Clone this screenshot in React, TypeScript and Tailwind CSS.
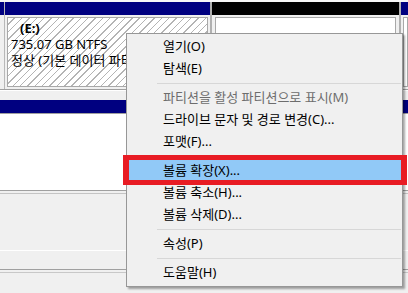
import React from 'react';

type Item = { label?: string; sep?: boolean; disabled?: boolean; active?: boolean };

const menu: Item[] = [
  { label: '열기(O)' },
  { label: '탐색(E)' },
  { sep: true },
  { label: '파티션을 활성 파티션으로 표시(M)', disabled: true },
  { label: '드라이브 문자 및 경로 변경(C)...' },
  { label: '포맷(F)...' },
  { sep: true },
  { label: '볼륨 확장(X)...', active: true },
  { label: '볼륨 축소(H)...' },
  { label: '볼륨 삭제(D)...' },
  { sep: true },
  { label: '속성(P)' },
  { sep: true },
  { label: '도움말(H)' },
];

const hatch =
  'bg-[repeating-linear-gradient(135deg,#ffffff_0px,#ffffff_4.2px,#b4b4b4_4.2px,#b4b4b4_5.2px)]';

export default function App() {
  return (
    <div className="relative w-[408px] h-[293px] overflow-hidden bg-[#f0f0f0] text-black font-['Noto_Sans','Noto_Sans_CJK_KR',sans-serif] text-[13px]">
      {/* disk 1 */}
      <div className="h-[2px] bg-[#f7f7f7]" />
      <div className="flex h-[88px] border-b border-[#a0a0a0]">
        <div className="w-[4px] flex flex-col">
          <div className="h-[13px] bg-[#000080]" />
        </div>
        <div className="w-[1px] bg-[#b8b8b8]" />
        <div className="w-[205px] flex flex-col px-[2px]">
          <div className="h-[13px] bg-[#000080] -mx-[2px]" />
          <div className={`mt-[2px] h-[70px] border border-[#a8a8a8] ${hatch} pl-[3px] pt-[2px] leading-[16px]`}>
            <div className="pl-[9px] font-bold">(E:)</div>
            <div>735.07 GB NTFS</div>
            <div className="whitespace-nowrap">정상 (기본 데이터 파티션)</div>
          </div>
        </div>
        <div className="w-[2px] bg-[#b0b0b0]" />
        <div className="w-[187px] flex flex-col px-[3px]">
          <div className="h-[13px] bg-black -mx-[3px]" />
          <div className="mt-[2px] h-[70px] border border-[#a8a8a8] bg-white" />
        </div>
        <div className="w-[2px] bg-[#b0b0b0]" />
        <div className="flex-1 flex flex-col">
          <div className="h-[13px] bg-[#000080]" />
          <div className="mt-[2px] ml-[2px] h-[70px] border border-[#a8a8a8] bg-white" />
        </div>
      </div>

      {/* disk 2 */}
      <div className="h-[10px] border-t border-white" />
      <div className="h-[13px] bg-[#000080]" />
      <div className="h-[77px] border-t border-[#a0a0a0] bg-white" />
      <div className="h-[4px] border-y border-[#a0a0a0] border-b-[#c4c4c4]" />
      <div className="h-[57px] border-b border-white" />
      <div className="h-[18px]" />
      <div className="h-[4px] border-y border-[#a0a0a0] border-b-[#c8c8c8]" />

      {/* context menu */}
      <div className="absolute left-[126px] top-[33px] w-[277px] border border-[#979797] bg-[#f0f0f0] py-[2px] shadow-[2px_2px_2px_rgba(0,0,0,0.35)]">
        {menu.map((m, i) =>
          m.sep ? (
            <div key={i} className="h-[7px] flex items-center pl-[30px] pr-[1px]">
              <div className="h-[1px] w-full bg-[#d7d7d7]" />
            </div>
          ) : (
            <div
              key={i}
              className={`h-[22px] flex items-center pl-[35px] mx-[1px] whitespace-nowrap ${
                m.active ? 'bg-[#91c9f7]' : ''
              } ${m.disabled ? 'text-[#6d6d6d]' : ''}`}
            >
              {m.label}
            </div>
          )
        )}
      </div>

      {/* red highlight annotation */}
      <div className="absolute left-[123px] top-[155px] w-[284px] h-[30px] border-x-[6px] border-y-[5px] border-[#e81c24]" />
    </div>
  );
}
